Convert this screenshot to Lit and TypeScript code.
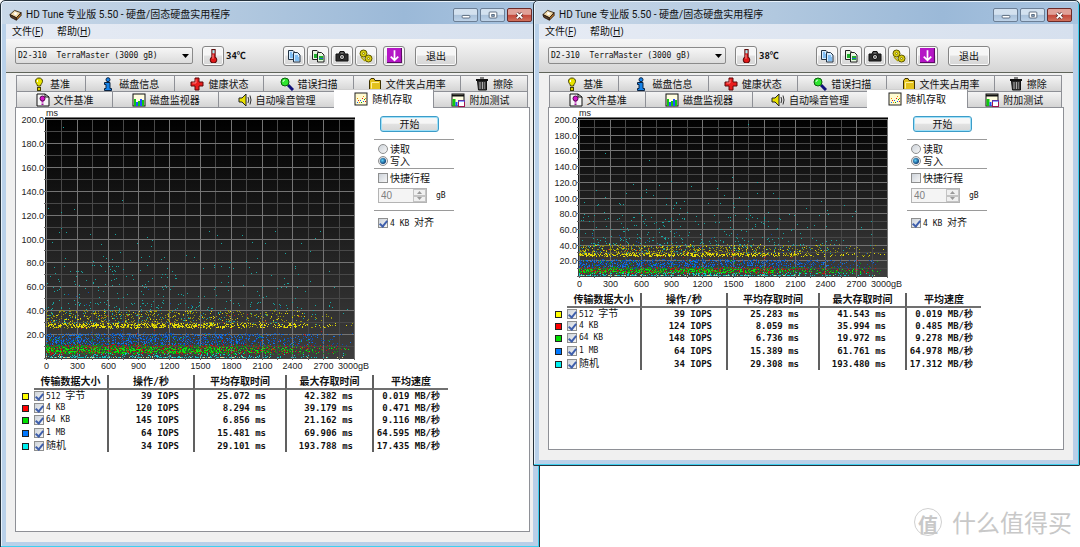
import { LitElement, html, svg, css } from "lit";
import { customElement, property } from "lit/decorators.js";

type Row = { name: string; color: string; iops: string; avg: string; max: string; speed: string };

const NAMES: [string, string][] = [
  ["512 字节", "#ffff00"],
  ["4 KB", "#ff0000"],
  ["64 KB", "#00e000"],
  ["1 MB", "#0078ff"],
  ["随机", "#00f0f0"],
];

const rows = (values: string[][]): Row[] =>
  values.map(([iops, avg, max, speed], i) => ({ name: NAMES[i][0], color: NAMES[i][1], iops, avg, max, speed }));

const LEFT_ROWS = rows([
  ["39", "25.072", "42.382", "0.019"],
  ["120", "8.294", "39.179", "0.471"],
  ["145", "6.856", "21.162", "9.116"],
  ["64", "15.481", "69.906", "64.595"],
  ["34", "29.101", "193.788", "17.435"],
]);
const RIGHT_ROWS = rows([
  ["39", "25.283", "41.543", "0.019"],
  ["124", "8.059", "35.994", "0.485"],
  ["148", "6.736", "19.972", "9.278"],
  ["64", "15.389", "61.761", "64.978"],
  ["34", "29.308", "193.480", "17.312"],
]);

/* Slow accesses, in thirds of a pixel from the plot's top left corner. */
const LEFT_OUTLIERS = [
  [52, 23], [228, 243], [6, 266], [44, 278], [85, 269], [40, 340], [46, 328], [61, 340], [132, 345],
  [208, 345], [19, 369], [490, 335], [514, 347], [589, 349], [619, 369], [688, 335], [821, 335],
  [807, 357], [766, 371], [304, 355], [319, 364], [166, 376],
];
const RIGHT_OUTLIERS = [
  [507, 16], [77, 102], [210, 124], [458, 173], [533, 188], [533, 221], [276, 185], [240, 199],
  [163, 196], [52, 214], [77, 233], [201, 209], [202, 220], [141, 223], [337, 202], [414, 208],
  [436, 228], [480, 233], [581, 221], [597, 237], [260, 238], [315, 245], [424, 252], [726, 245],
  [680, 268], [222, 229], [186, 235], [122, 254], [16, 248], [57, 254], [464, 264],
];

/* ---------- icons ---------- */
const icons: Record<string, unknown> = {
  bulb: svg`<path d="M7 1C4.600 1 3.500 2.500 3.500 4.300C3.500 6.200 5.300 7 5.500 9H8.500C8.700 7 10.500 6.200 10.500 4.300C10.500 2.500 9.400 1 7 1Z" fill="#e8e400" stroke="#444000" /><path d="M5.500 3v2" stroke="#fff"/><rect x="5.500" y="10.500" width="3" height="3" fill="#e0d400" stroke="#444000"/>`,
  info: svg`<circle cx="7" cy="2.700" r="2" fill="#1683e8" stroke="#0a2240"/><path d="M3.500 5.500H9V11.500H10.500V13.500H3.500V11.500H5V7.500H3.500Z" fill="#1683e8" stroke="#0a2240"/>`,
  cross: svg`<path d="M5 1H9V5H13V9H9V13H5V9H1V5H5Z" fill="#e81c1c" stroke="#5c0808"/><path d="M6 2.500V6H2.500" stroke="#ff8080" fill="none"/>`,
  search: svg`<path d="M8 8L13 13" stroke="#10107a" stroke-width="3"/><circle cx="5" cy="5" r="4" fill="#2ee62e" stroke="#0c5a0c"/><path d="M3 5Q3 3 5 3" stroke="#d8ffd8" fill="none"/>`,
  folder: svg`<path d="M1.500 3.500L3 1.500H6L7 3.500H12.500V13H1.500Z" fill="#e3c21c" stroke="#3d3000"/><path d="M3.500 5.500H11M3.500 5.500V11.500" stroke="#fff09a" fill="none"/>`,
  trash: svg`<path d="M2.500 4H11.500V13H3.500Z" fill="#3c3c3c" stroke="#111"/><path d="M1 3H13" stroke="#111" stroke-width="2"/><path d="M5 1H9" stroke="#111"/><path d="M5 5V12M7.500 5V12" stroke="#aaa"/><path d="M9.500 5V12" stroke="#777"/>`,
  filebulb: svg`<path d="M1 1H9L13 4V13H1Z" fill="#f6f6f6" stroke="#111"/><path d="M9 1V4H13" fill="none" stroke="#111"/><circle cx="6.500" cy="5.500" r="2.500" fill="#d316c8" stroke="#50054b"/><path d="M6.500 8V9.500M6.500 10.500V12" stroke="#a010a0" stroke-width="2"/>`,
  monitor: svg`<rect x="1" y="1" width="12" height="12" fill="#fffde0" stroke="#111"/><path d="M3 13V6M7 13V8M11 13V7" stroke="#10c810" stroke-width="2"/><path d="M5 13V9M9 13V6" stroke="#1f50ff" stroke-width="2"/>`,
  speaker: svg`<path d="M1 5H4L8 1V13L4 9H1Z" fill="#e8e000" stroke="#222"/><path d="M10 4Q11.500 7 10 10M12 2.500Q14 7 12 11.500" stroke="#333" fill="none"/>`,
  scatter: svg`<rect x="1" y="1" width="12" height="12" fill="#fffbd0" stroke="#222"/><path d="M3 10h1v1h-1zM6 8h1v1h-1zM9 9h1v1h-1z" fill="#1464ff"/><path d="M4 8h1v1h-1zM8 6h1v1h-1zM11 9h1v1h-1z" fill="#e01818"/><path d="M3 6h1v1h-1zM5 10h1v1h-1zM9 4h1v1h-1zM11 6h1v1h-1z" fill="#e89000"/><path d="M7 10h1v1h-1zM10 7h1v1h-1z" fill="#10a010"/>`,
  extra: svg`<rect x="1" y="1" width="12" height="12" fill="#fffde0" stroke="#111"/><path d="M1 2.500H13" stroke="#111" stroke-width="2"/><path d="M3 13V6" stroke="#10c810" stroke-width="3"/><path d="M5.500 13V9" stroke="#1f50ff" stroke-width="2"/><rect x="7.500" y="7.500" width="6" height="6" fill="#fff" stroke="#a01450"/><path d="M7 8H14" stroke="#1f50ff"/>`,
  copy: svg`<path d="M1.500 1.500H6L8.500 4V10.500H1.500Z" fill="#d5ecff" stroke="#234"/><path d="M3 4H5M3 6H7M3 8H7" stroke="#2b8fe8"/><path d="M6.500 3.500H10.500L13 6V13H6.500Z" fill="#d5ecff" stroke="#234"/><path d="M8 7H11M8 9H12M8 11H12" stroke="#2b8fe8"/>`,
  copyimg: svg`<path d="M1.500 1.500H6L8.500 4V10.500H1.500Z" fill="#e8f6e0" stroke="#222"/><path d="M3 5H7V9H3Z" fill="#1fae2c"/><path d="M6.500 3.500H10.500L13 6V13H6.500Z" fill="#e8f6e0" stroke="#222"/><path d="M8 7H12V11H8Z" fill="#1fae2c"/><path d="M8 9h4v1h-4z" fill="#2468c8"/>`,
  camera: svg`<path d="M1 5H4L5 2.500H9L10 5H13V12H1Z" fill="#2e2e2e" stroke="#111"/><circle cx="7" cy="8" r="2.500" fill="#ddd" stroke="#000"/><circle cx="7" cy="8" r="1" fill="#555"/><path d="M5.500 4H8.500" stroke="#999"/>`,
  coins: svg`<circle cx="4.500" cy="4.500" r="3.500" fill="#d8cc10" stroke="#5c5600"/><circle cx="4.500" cy="4.500" r="1" fill="#e8e8c0" stroke="#8c8400"/><circle cx="9.500" cy="9.500" r="3.500" fill="#d8cc10" stroke="#5c5600"/><circle cx="9.500" cy="9.500" r="1" fill="#e8e8c0" stroke="#8c8400"/><path d="M2 8L6 12" stroke="#b0a600" stroke-width="1.500"/>`,
  down: svg`<rect width="14" height="14" fill="#b516c6"/><path d="M0 13.500H14M13.500 0V14" stroke="#5d0a66"/><path d="M7 2V11M3.500 8L7 11.500L10.500 8" stroke="#fff" stroke-width="1.600" fill="none"/>`,
  thermo: svg`<path d="M5.500 1.500H8.500V8.500A3 3 0 1 1 5.500 8.500Z" fill="#e01818" stroke="#5c0c0c"/><path d="M6 2H8V5H6Z" fill="#9ff0f4"/><path d="M6.500 6V10" stroke="#ff9090"/>`,
  app: svg`<path d="M1 6L6 1.500L13 4L8 9.500Z" fill="#f0d9a8" stroke="#3a2a18"/><path d="M1 6L8 9.500V12L2 9Z" fill="#5a4028" stroke="#2a1a10"/><path d="M8 9.500L13 4V7L8 12Z" fill="#c07a28" stroke="#2a1a10"/><circle cx="7" cy="5" r="1.500" fill="#fff"/>`,
  min: svg`<rect x="2.500" y="7.500" width="9" height="3" rx="1" fill="#fff" stroke="#4c5c70"/>`,
  max: svg`<rect x="2.500" y="3.500" width="9" height="7" rx="1" fill="#fff" stroke="#4c5c70"/><rect x="5.500" y="6.500" width="3" height="2" fill="#8fb0d0" stroke="#4c5c70"/>`,
  close: svg`<path d="M3.500 4L10.500 10.500M10.500 4L3.500 10.500" stroke="#5a2a28" stroke-width="4"/><path d="M3.500 4L10.500 10.500M10.500 4L3.500 10.500" stroke="#fff" stroke-width="2.200"/>`,
};
const icon = (name: string, size = 14) =>
  html`<svg class="icon" width=${size} height=${size} viewBox="0 0 14 14" fill="none" aria-hidden="true">${icons[name]}</svg>`;

const TABS_BACK: [string, string][] = [
  ["bulb", "基准"], ["info", "磁盘信息"], ["cross", "健康状态"],
  ["search", "错误扫描"], ["folder", "文件夹占用率"], ["trash", "擦除"],
];
const TABS_FRONT: [string, string][] = [
  ["filebulb", "文件基准"], ["monitor", "磁盘监视器"], ["speaker", "自动噪音管理"],
  ["scatter", "随机存取"], ["extra", "附加测试"],
];

/* ---------- scatter chart ---------- */
@customElement("access-chart")
export class AccessChart extends LitElement {
  @property({ type: Number }) plotHeight = 239;
  @property({ type: Number }) seed = 1;
  @property({ attribute: false }) outliers: number[][] = [];

  static styles = css`
    :host { display: block; }
    svg { display: block; }
    text { font: 9px "Liberation Sans", Arial, sans-serif; fill: #222; }
  `;

  private cloud() {
    let state = this.seed * 7919 + 17;
    const rnd = () => {
      state = (state * 1664525 + 1013904223) % 4294967296;
      return state / 4294967296;
    };
    const position = () => {
      for (;;) {
        const x = rnd();
        const density = x < 0.45 ? 1 : Math.max(0.04, 1 - (x - 0.45) * 1.75);
        if (rnd() < density) return Math.floor(x * 307);
      }
    };
    const h = this.plotHeight;
    const dots = (n: number, lo: number, hi: number) => {
      let d = "";
      for (let i = 0; i < n; i++) {
        const ms = lo + rnd() * (hi - lo);
        d += `M${30 + position()} ${Math.min(10 + h, Math.floor(11 + h - (ms / 200) * h))}h1v1h-1z`;
      }
      return d;
    };
    const rare = this.outliers.map(([x, y]) => `M${30 + Math.round(x / 3)} ${11 + Math.round(y / 3)}h1v1h-1z`).join("");
    const k = h / 239;
    return [
      ["#16a5a1", dots(250, 28, 48) + dots(140, 48, 78) + dots(22, 78, 96) + rare],
      ["#0a4fb0", dots(800 * (0.4 + 0.6 * k), 10, 21) + dots(20, 20, 62)],
      ["#1672e0", dots(480 * k, 11, 20)],
      ["#9c990a", dots(360, 30, 40) + dots(260, 25, 30)],
      ["#e6dc08", dots(520 * k, 25, 29) + dots(70, 30, 40)],
      ["#c01616", dots(800 * k, 3, 11) + dots(30, 12, 38)],
      ["#0a9a14", dots(800 * k, 3, 11) + dots(50, 11, 20)],
      ["#10e010", dots(500 * k, 4, 9)],
      ["#14c8c4", dots(160, 0, 4) + dots(150, 0, 1)],
      ["#d8d890", dots(60, 0, 1)],
    ];
  }

  render() {
    const h = this.plotHeight;
    const range = (n: number) => Array.from({ length: n }, (_, i) => i);
    const gx = (i: number) => 30.5 + Math.round(i * 15.4);
    const gy = (i: number) => 11.5 + Math.round((i * h) / 20);
    const bottom = 11 + h;
    return html`<svg width="356" height=${h + 28} shape-rendering="crispEdges" role="img" aria-label="ms / gB">
      <defs><linearGradient id="g" x1="0" y1="0" x2="0" y2="1">
        <stop offset="0" stop-color="#000"/><stop offset="1" stop-color="#3e3e3e"/></linearGradient></defs>
      <rect x="29" y="9" width="310" height=${h + 3} fill="url(#g)"/>
      ${range(20).filter((i) => i % 2).map((i) => svg`<path d="M${gx(i)} 11V${bottom}" stroke="#484848"/>`)}
      ${range(20).filter((i) => i % 2).map((i) => svg`<path d="M30 ${gy(i)}H338" stroke="#484848"/>`)}
      ${range(11).map((i) => svg`<path d="M${gx(i * 2)} 11V${bottom + 2}" stroke="#747474"/>`)}
      ${range(10).map((i) => svg`<path d="M30 ${gy(i * 2)}H338" stroke="#747474"/>`)}
      ${range(21).map((i) => svg`<path d="M28 ${gy(i)}H30M${gx(i)} ${bottom}v2" stroke="#666"/>`)}
      ${this.cloud().map(([color, d]) => svg`<path d=${d} fill=${color}/>`)}
      <path d="M28.500 9.500H338.500" stroke="#777"/>
      <text x="30" y="8">ms</text>
      ${range(10).map((i) => svg`<text x="28" y=${Math.round(11 + (i * h) / 10) + 4} text-anchor="end">${200 - i * 20}.0</text>`)}
      ${range(10).map((i) => svg`<text x=${gx(i * 2)} y=${bottom + 11} text-anchor="middle">${i * 300}</text>`)}
      <text x="322" y=${bottom + 11}>3000gB</text>
    </svg>`;
  }
}

/* ---------- application window ---------- */
@customElement("tune-window")
export class TuneWindow extends LitElement {
  @property() temperature = "";
  @property({ type: Number }) plotHeight = 239;
  @property({ type: Number }) seed = 1;
  @property({ attribute: false }) results: Row[] = [];
  @property({ attribute: false }) outliers: number[][] = [];

  static styles = css`
    * { box-sizing: border-box; }
    :host {
      display: flex;
      flex-direction: column;
      box-sizing: border-box;
      min-width: 0;
      color: #111;
      font: 10px/12px "Open Sans", "Noto Sans CJK SC", sans-serif;
      border: 1px solid #26323c;
      border-radius: 5px 5px 1px 1px;
      background: linear-gradient(90deg, #b9d1ea, #b9cfe8);
      box-shadow: inset -1px -1px #3fd0f0, inset 1px 1px #e8f2fb;
      padding: 1px 6px 5px 5px;
    }
    button, input, select { font: inherit; color: inherit; margin: 0; padding: 0; }
    .icon { display: block; flex: none; }
    header {
      display: flex;
      align-items: center;
      gap: 4px;
      height: 22px;
      margin: 0 -5px 0 -4px;
      padding: 4px 6px 0 7px;
      border-radius: 4px 4px 0 0;
      background: linear-gradient(90deg, #c9d8e8 0%, #b4cae0 40%, #9bb9d8 75%, #a9c4e0 100%);
    }
    h1 { flex: 1; margin: 0; font: 10px/12px Roboto, "Noto Sans CJK SC", sans-serif; white-space: nowrap; }
    .caption { display: flex; gap: 2px; }
    .caption button {
      display: grid;
      place-items: center;
      width: 25px;
      height: 14px;
      border: 1px solid #6c7f96;
      border-radius: 2px;
      background: linear-gradient(#d3e1ef 45%, #a9c1da 50%, #bdd2e8);
    }
    .caption .close { border-color: #6c2a28; background: linear-gradient(#e0a198 45%, #c3473a 50%, #d0705c); }
    nav.menu {
      display: flex;
      gap: 14px;
      height: 15px;
      padding: 1px 6px;
      background: linear-gradient(90deg, #e6ebf4, #d6e0ee);
    }
    .menu a { color: inherit; text-decoration: none; }
    .toolbar {
      display: flex;
      align-items: center;
      height: 34px;
      padding: 0 9px;
      border-bottom: 1px solid #5f645a;
      box-shadow: 0 1px #fff;
      background: linear-gradient(#f6f6f6, #d5d5d5);
    }
    .drive {
      width: 178px;
      height: 17px;
      padding: 0 2px;
      appearance: none;
      border: 1px solid #8a8a8a;
      border-radius: 2px;
      font: 8px/12px "DejaVu Sans Mono", monospace;
      background: url('data:image/svg+xml,<svg xmlns="http://www.w3.org/2000/svg" width="7" height="4"><path d="M0 0H7L3.5 4Z" fill="black"/></svg>') no-repeat right 3px center,
        linear-gradient(#f6f6f6, #dcdcdc);
    }
    .push {
      display: grid;
      place-items: center;
      height: 20px;
      border: 1px solid #858585;
      border-radius: 3px;
      background: linear-gradient(#f6f6f6 45%, #e2e2e2 50%, #d6d6d6);
      box-shadow: inset 0 0 0 1px #fafafa;
    }
    .tool { width: 22px; }
    .temp { margin: 0 2px 0 9px; }
    output { width: 57px; font: bold 9px/12px "DejaVu Sans Mono", "Noto Sans CJK SC", monospace; white-space: nowrap; }
    .tools { display: flex; gap: 2px; }
    .tools .save { margin-left: 4px; }
    .exit { width: 42px; margin-left: 10px; }
    .client {
      flex: 1;
      display: flex;
      flex-direction: column;
      padding: 2px var(--client-right, 3px) 10px 9px;
      background: #f0f0f0;
    }
    .tabs { display: grid; margin: 0 2px 0 1px; }
    .back { grid-template-columns: 70fr 89fr 89fr 89fr 107fr 67fr; }
    .front { grid-template-columns: 97fr 106fr 115fr 99fr 94fr; }
    .tab {
      display: flex;
      align-items: center;
      justify-content: center;
      gap: 4px;
      height: 16px;
      border: solid #8e9096;
      border-width: 1px 1px 0 0;
      background: linear-gradient(#f4f4f4, #d4d4d4);
      white-space: nowrap;
      overflow: hidden;
    }
    .tab:first-child { border-left-width: 1px; }
    .tab[aria-selected="true"] {
      position: relative;
      height: 19px;
      margin: -2px 0 -1px -1px;
      background: #fff;
      border-top-color: #d0d0d0;
    }
    .panel {
      flex: 1;
      border: 1px solid #8e9096;
      background: #fff;
      padding-bottom: 79px;
    }
    .top { display: flex; gap: 2px; }
    .options { width: 80px; padding-top: 8px; }
    .start { width: 59px; height: 16px; margin-left: 6px; border-color: #3c9cc8; box-shadow: inset 0 0 0 1px #9fe0f8; }
    hr { height: 1px; margin: 0; border: 0; background: #9a9a9a; }
    .start + hr { margin-top: 7px; }
    .group { padding: 3px 0 1px 4px; }
    .group.last { padding-top: 6px; }
    label { display: flex; align-items: center; gap: 2px; height: 12px; white-space: nowrap; }
    .mono { font: 8px/12px "DejaVu Sans Mono", "Noto Sans CJK SC", monospace; }
    .cjk { font-size: 10px; }
    input[type="checkbox"], input[type="radio"] {
      flex: none;
      display: grid;
      place-items: center;
      width: 10px;
      height: 10px;
      appearance: none;
      border: 1px solid #8e8f8f;
      background: linear-gradient(135deg, #cdd3da, #f6f6f6);
    }
    input[type="radio"] { border-radius: 50%; }
    input[type="radio"]:checked::before {
      content: "";
      width: 6px;
      height: 6px;
      border-radius: 50%;
      background: radial-gradient(circle at 40% 40%, #5fd0f8, #0b3f78 70%);
    }
    input[type="checkbox"]:checked::before {
      content: "";
      width: 3px;
      height: 6px;
      margin-top: -1px;
      border: solid #3f5fac;
      border-width: 0 2px 2px 0;
      transform: rotate(40deg);
    }
    .stroke { display: flex; align-items: center; margin: 4px 0 6px; color: #888; }
    .spin { display: flex; width: 49px; height: 15px; border: 1px solid #b4b4b4; background: #f4f4f4; }
    .spin input { flex: 1; min-width: 0; padding: 0 2px; border: 0; background: none; appearance: textfield; font: 10px/12px "Liberation Sans", sans-serif; color: #808080; }
    .spin input::-webkit-inner-spin-button { display: none; }
    .arrows { display: grid; width: 13px; }
    .arrows button { border: 1px solid #c4c4c4; background: #f0f0f0; display: grid; place-items: center; }
    .unit { height: auto; margin-left: 9px; color: #111; }
    table {
      width: 426px;
      margin-left: 6px;
      table-layout: fixed;
      border-collapse: separate;
      border-spacing: 0;
      font: bold 9px/12px "DejaVu Sans Mono", "Noto Sans CJK SC", monospace;
      white-space: pre;
    }
    th, td { padding: 0; height: 12px; text-align: right; }
    th { height: 15px; border-bottom: 2px solid #707070; text-align: center; font-size: 10px; }
    th:first-child { border-bottom: 0; }
    th:nth-child(n + 3), td:nth-child(n + 3) { border-left: 2px solid #606060; }
    tr:nth-child(4) td { height: 14px; }
    td:nth-child(3) { padding-right: 14px; }
    td:nth-child(4), td:nth-child(5) { padding-right: 19px; }
    td:nth-child(6) { padding-right: 8px; }
    td label { font-weight: normal; font-size: 8px; }
    .swatch { display: block; width: 7px; height: 7px; border: 1px solid #222; }
    .c0 { width: 12px; }
    .c1 { width: 73px; }
    .c2 { width: 86px; }
    .c3 { width: 92px; }
    .c4 { width: 87px; }
  `;

  private tab = ([glyph, label]: [string, string]) => html`
    <button class="tab" role="tab" aria-selected=${glyph === "scatter"}>${icon(glyph)}${label}</button>`;

  private text(value: string) {
    return /^[\x20-\x7f]/.test(value)
      ? html`<span>${value.replace(/[^\x20-\x7f]+/g, "")}</span>${/[^\x20-\x7f]/.test(value)
          ? html`<span class="cjk">${value.replace(/[\x20-\x7f]+/g, "")}</span>` : ""}`
      : html`<span class="cjk">${value}</span>`;
  }

  render() {
    return html`
      <header>
        ${icon("app", 13)}
        <h1>HD Tune 专业版 5.50 - 硬盘/固态硬盘实用程序</h1>
        <div class="caption">
          <button aria-label="最小化">${icon("min", 12)}</button>
          <button aria-label="最大化">${icon("max", 12)}</button>
          <button class="close" aria-label="关闭">${icon("close", 11)}</button>
        </div>
      </header>
      <nav class="menu"><a href="#file">文件(<u>F</u>)</a><a href="#help">帮助(<u>H</u>)</a></nav>
      <div class="toolbar">
        <select class="drive" aria-label="驱动器"><option>D2-310\u00a0\u00a0TerraMaster (3000 gB)</option></select>
        <button class="push tool temp" aria-label="温度">${icon("thermo", 15)}</button>
        <output>${this.temperature}℃</output>
        <div class="tools">
          <button class="push tool" aria-label="复制文本">${icon("copy")}</button>
          <button class="push tool" aria-label="复制图像">${icon("copyimg")}</button>
          <button class="push tool" aria-label="截图">${icon("camera")}</button>
          <button class="push tool" aria-label="选项">${icon("coins")}</button>
          <button class="push tool save" aria-label="保存">${icon("down", 15)}</button>
        </div>
        <button class="push exit">退出</button>
      </div>
      <div class="client">
        <div class="tabs back" role="tablist">${TABS_BACK.map(this.tab)}</div>
        <div class="tabs front" role="tablist">${TABS_FRONT.map(this.tab)}</div>
        <div class="panel">
          <div class="top">
            <access-chart .plotHeight=${this.plotHeight} .seed=${this.seed} .outliers=${this.outliers}></access-chart>
            <div class="options">
              <button class="push start">开始</button>
              <hr>
              <div class="group">
                <label><input type="radio" name="mode">读取</label>
                <label><input type="radio" name="mode" checked>写入</label>
              </div>
              <hr>
              <div class="group">
                <label><input type="checkbox">快捷行程</label>
                <div class="stroke">
                  <span class="spin">
                    <input id="size" type="number" value="40" disabled>
                    <span class="arrows">
                      <button disabled aria-label="增加"><svg class="icon" width="5" height="3"><path d="M0 3L2.500 0L5 3Z" fill="#999"/></svg></button>
                      <button disabled aria-label="减少"><svg class="icon" width="5" height="3"><path d="M0 0L2.500 3L5 0Z" fill="#999"/></svg></button>
                    </span>
                  </span>
                  <label class="unit mono" for="size">gB</label>
                </div>
              </div>
              <hr>
              <div class="group last">
                <label class="mono"><input type="checkbox" checked><span>4 KB <span class="cjk">对齐</span></span></label>
              </div>
            </div>
          </div>
          <table>
            <colgroup><col class="c0"><col class="c1"><col class="c2"><col class="c3"><col class="c4"><col></colgroup>
            <thead><tr><th></th><th>传输数据大小</th><th>操作/秒</th><th>平均存取时间</th><th>最大存取时间</th><th>平均速度</th></tr></thead>
            <tbody>${this.results.map((r) => html`<tr><td><span class="swatch" style="background:${r.color}"></span></td><td><label><input type="checkbox" checked><span>${this.text(r.name)}</span></label></td><td>${r.iops} IOPS</td><td>${r.avg} ms</td><td>${r.max} ms</td><td>${r.speed} MB/秒</td></tr>`)}</tbody>
          </table>
        </div>
      </div>`;
  }
}

/* ---------- desktop ---------- */
@customElement("app-root")
export class AppRoot extends LitElement {
  static styles = css`
    :host {
      display: grid;
      grid-template-columns: 1fr 1fr;
      align-items: start;
      position: relative;
      min-height: 100vh;
      background: #fff;
      overflow: hidden;
    }
    .main { align-self: stretch; }
    .second { --client-right: 9px; position: relative; margin-left: -7px; }
    .mark {
      position: absolute;
      right: 8px;
      bottom: 10px;
      display: flex;
      align-items: center;
      gap: 10px;
      font: 24px/32px "Noto Sans CJK SC", sans-serif;
      color: #c8c8c8;
    }
    .seal {
      display: grid;
      place-items: center;
      width: 26px;
      height: 26px;
      border: 1px solid #d0d0d0;
      border-radius: 50%;
      font-size: 20px;
      font-weight: bold;
    }
  `;

  render() {
    return html`
      <tune-window class="main" temperature="34" .plotHeight=${239} .seed=${3} .results=${LEFT_ROWS} .outliers=${LEFT_OUTLIERS}></tune-window>
      <tune-window class="second" temperature="38" .plotHeight=${157} .seed=${8} .results=${RIGHT_ROWS} .outliers=${RIGHT_OUTLIERS}></tune-window>
      <div class="mark"><span class="seal">值</span><span>什么值得买</span></div>`;
  }
}
